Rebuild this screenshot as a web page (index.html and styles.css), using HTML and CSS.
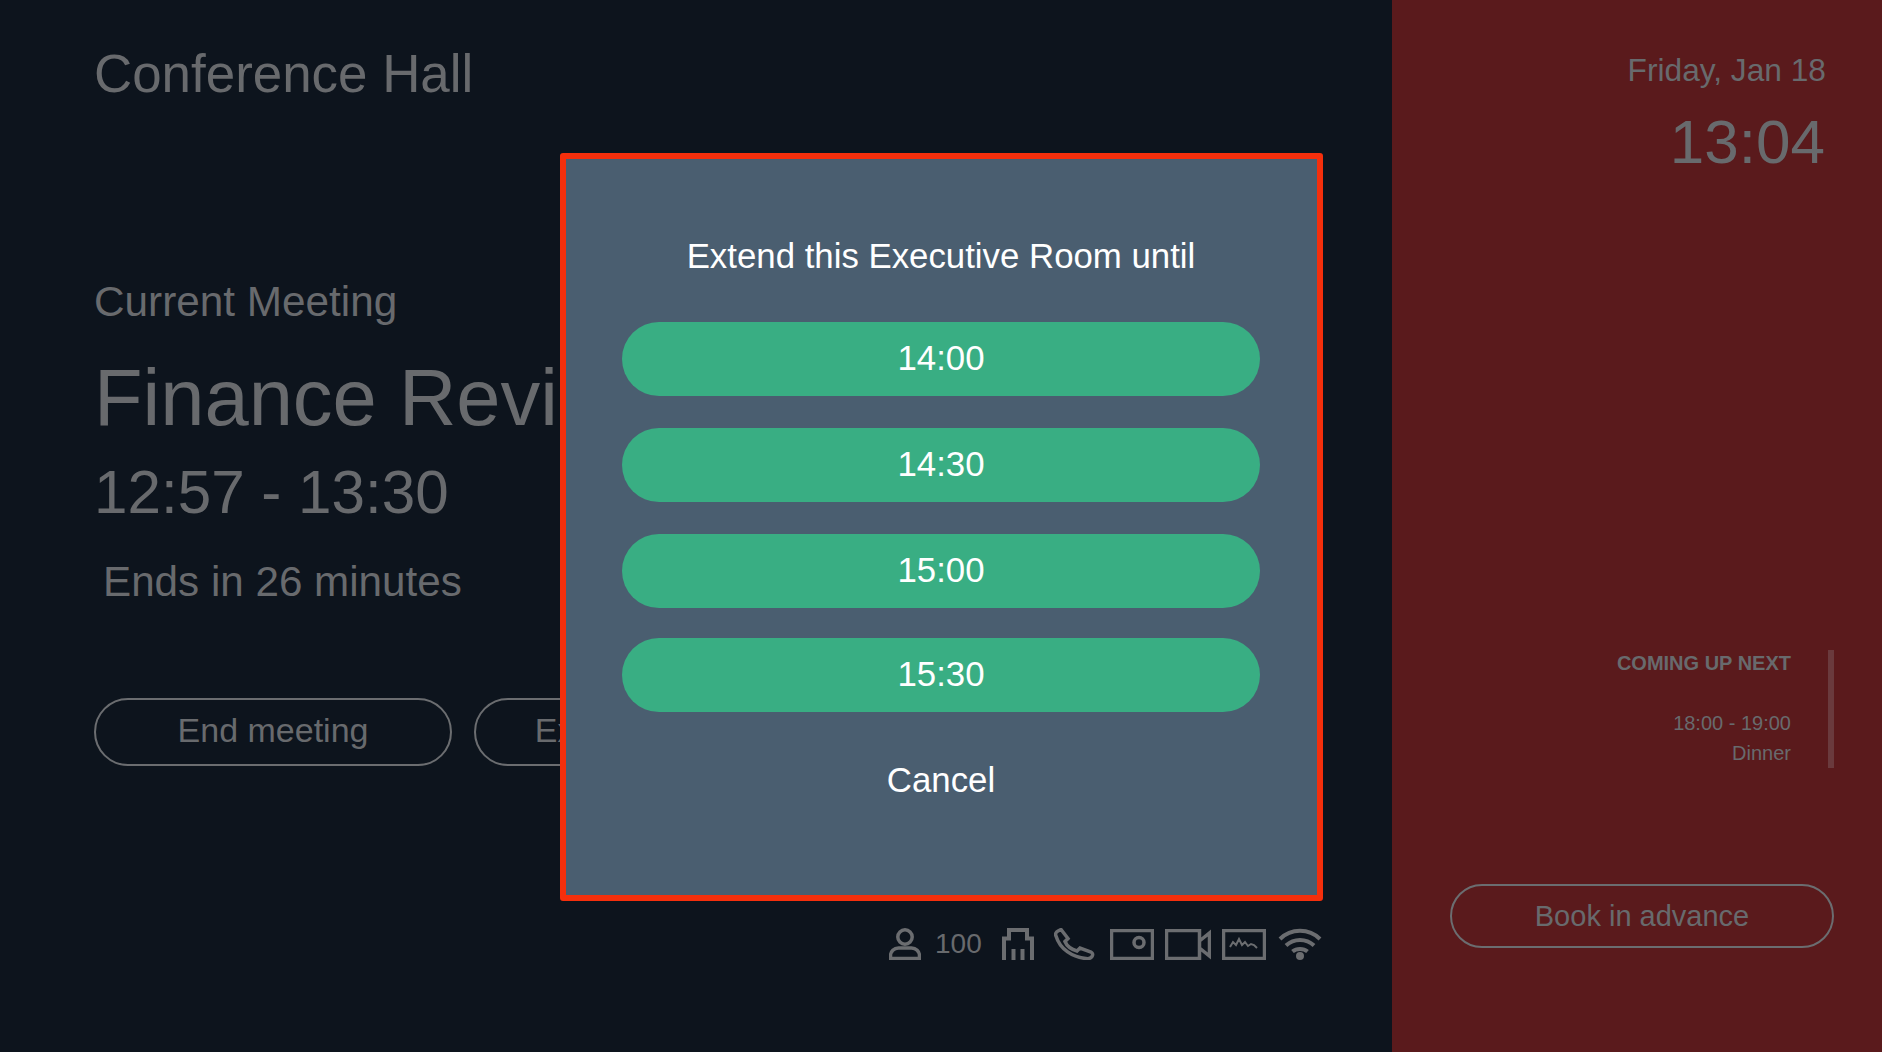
FILE: index.html
```html
<!DOCTYPE html>
<html lang="en">
<head>
<meta charset="utf-8">
<title>Conference Hall</title>
<link rel="stylesheet" href="styles.css">
</head>
<body>
<div class="screen">
  <main class="main">
    <h1 class="room">Conference Hall</h1>
    <section class="meeting">
      <div class="label">Current Meeting</div>
      <div class="title">Finance Review</div>
      <div class="time">12:57 - 13:30</div>
      <div class="ends">Ends in 26 minutes</div>
      <div class="actions">
        <span class="pill end">End meeting</span>
        <span class="pill extend">Extend meeting</span>
      </div>
    </section>
    <div class="amenities">
      <svg class="ic" width="32" height="32" viewBox="0 0 32 32"><circle cx="16" cy="9" r="7.200"/><path d="M1.500 30.500v-2.500c0-4.500 3.500-8 8-8h13c4.500 0 8 3.500 8 8v2.500z"/></svg>
      <span class="count">100</span>
      <svg class="ic jack" width="32" height="32" viewBox="0 0 32 32"><path class="heavy" d="M2 32V10.500h5V2h18v8.500h5V32M11.500 32V21M20.500 32V21"/></svg>
      <svg class="ic phone" width="41" height="32" viewBox="0 0 41 32"><path d="M2 8c-1-2 0-4 2-5l3-1.500 7 9-3 3c2 5 7 8 12 9.500l3-3 11 4c2 1 2 3 1 4.500s-3 2.500-6 2c-13-1-26-9-30-22.500z"/></svg>
      <svg class="ic card" width="44" height="31" viewBox="0 0 44 31"><rect x="1.500" y="1.500" width="41" height="28"/><circle cx="29" cy="13.500" r="5"/></svg>
      <svg class="ic camera" width="46" height="31" viewBox="0 0 46 31"><path d="M1.500 1.500h33v28h-33zM34.500 12l10-8v23l-10-8z"/></svg>
      <svg class="ic monitor" width="44" height="31" viewBox="0 0 44 31"><rect x="1.500" y="1.500" width="41" height="28"/><path class="thin" d="M8 18l3-5 3 3 3-6 3 6 3-3 3 4 3-2 3 1 3 3"/></svg>
      <svg class="ic wifi" width="44" height="32" viewBox="0 0 44 32"><path class="heavy" d="M2 11c11-11 29-11 40 0M8 17.500c8-7.500 20-7.500 28 0M14.500 23.500c4-3.500 11-3.500 15 0"/><circle class="dot" cx="22" cy="28" r="4"/></svg>
    </div>
  </main>
  <aside class="side">
    <div class="date">Friday, Jan 18</div>
    <div class="clock">13:04</div>
    <div class="next">
      <div class="next-text">
        <div class="next-head">COMING UP NEXT</div>
        <div class="next-time">18:00 - 19:00</div>
        <div class="next-name">Dinner</div>
      </div>
      <div class="next-bar"></div>
    </div>
    <span class="pill book">Book in advance</span>
  </aside>
</div>
<div class="modal">
  <div class="modal-title">Extend this Executive Room until</div>
  <div class="option">14:00</div>
  <div class="option">14:30</div>
  <div class="option">15:00</div>
  <div class="option last">15:30</div>
  <div class="cancel">Cancel</div>
</div>
</body>
</html>
```
FILE: styles.css
```css
* { box-sizing: border-box; }
html, body { margin: 0; height: 100%; overflow: hidden; }
body { font-family: "Liberation Sans", Arial, sans-serif; background: #0d141d; color: #686a6d; }
.screen { display: flex; height: 1052px; position: relative; }
.main { width: 1392px; flex: none; padding: 0 0 0 94px; display: flex; flex-direction: column; background: #0d141d; overflow: hidden; }
.room { margin: 44px 0 0; font-size: 52.900px; line-height: 60px; font-weight: 400; }
.meeting { margin-top: 174px; white-space: nowrap; }
.label { font-size: 42.300px; line-height: 48px; }
.title { margin-top: 27px; font-size: 79.500px; line-height: 90px; }
.time { margin-top: 15px; font-size: 60.200px; line-height: 70px; }
.ends { margin: 30px 0 0 9px; font-size: 42.200px; line-height: 48px; }
.actions { display: flex; gap: 22px; margin-top: 92px; }
.pill { display: flex; align-items: center; justify-content: center; border: 2px solid #6b6d70; border-radius: 40px; font-size: 34px; white-space: nowrap; }
.end, .extend { width: 358px; height: 68px; flex: none; padding-bottom: 3px; }
.amenities { display: flex; align-items: center; margin-top: 161px; padding-left: 795px; height: 34px; }
.ic { flex: none; fill: none; stroke: #6b6d70; stroke-width: 3.500; }
.ic .dot { fill: #6b6d70; stroke: none; }
.ic .thin { stroke-width: 2; }
.ic .heavy { stroke-width: 4; }
.count { margin-left: 14px; width: 53px; font-size: 28px; }
.jack { margin-left: 14px; }
.phone { margin-left: 20px; }
.card { margin-left: 15px; }
.camera { margin-left: 11px; }
.monitor { margin-left: 11px; }
.wifi { margin-left: 12px; }
.side { flex: 1; background: #5a1a1c; display: flex; flex-direction: column; padding: 0 48px 0 58px; }
.date { margin: 51px 8px 0 0; text-align: right; font-size: 31.700px; line-height: 38px; }
.clock { margin: 18px 9px 0 0; text-align: right; font-size: 62px; line-height: 70px; }
.next { display: flex; justify-content: flex-end; gap: 37px; margin-top: 473px; }
.next-text { text-align: right; padding-top: 1px; }
.next-head { font-size: 20px; line-height: 24px; font-weight: 700; }
.next-time { margin-top: 36px; font-size: 20px; line-height: 24px; }
.next-name { margin-top: 6px; font-size: 20px; line-height: 24px; }
.next-bar { width: 6px; height: 118px; background: #6a3a3d; }
.book { margin-top: 116px; height: 64px; font-size: 29px; }
.modal { position: absolute; left: 560px; top: 153px; width: 763px; height: 748px; padding-right: 1px; background: #4a5e70; border: 6px solid #f52f0c; border-radius: 3px; display: flex; flex-direction: column; align-items: center; color: #fff; }
.modal-title { margin-top: 75px; font-size: 34.800px; line-height: 44px; }
.option { width: 638px; height: 74px; flex: none; margin-top: 32px; padding-bottom: 2px; background: #39ae83; border-radius: 37px; display: flex; align-items: center; justify-content: center; font-size: 34.800px; }
.modal-title + .option { margin-top: 44px; }
.option.last { margin-top: 30px; }
.cancel { margin-top: 48px; font-size: 34.800px; line-height: 40px; }
```
